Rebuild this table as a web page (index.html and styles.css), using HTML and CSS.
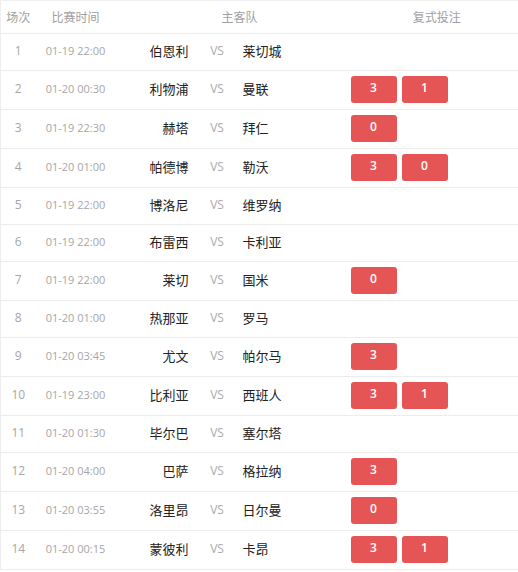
FILE: index.html
```html
<!DOCTYPE html>
<html lang="zh">
<head>
<meta charset="utf-8">
<link rel="stylesheet" href="styles.css">
</head>
<body>
<table class="bets">
  <colgroup>
    <col class="c-no"><col class="c-time"><col class="c-home"><col class="c-vs"><col class="c-away"><col class="c-bet">
  </colgroup>
  <thead>
    <tr><th>场次</th><th>比赛时间</th><th colspan="3" class="th-teams">主客队</th><th class="th-bet">复式投注</th></tr>
  </thead>
  <tbody>
    <tr class="short"><td class="no">1</td><td class="time">01-19 22:00</td><td class="home">伯恩利</td><td class="vs">VS</td><td class="away">莱切城</td><td class="bet"></td></tr>
    <tr><td class="no">2</td><td class="time">01-20 00:30</td><td class="home">利物浦</td><td class="vs">VS</td><td class="away">曼联</td><td class="bet"><span class="btn">3</span><span class="btn">1</span></td></tr>
    <tr><td class="no">3</td><td class="time">01-19 22:30</td><td class="home">赫塔</td><td class="vs">VS</td><td class="away">拜仁</td><td class="bet"><span class="btn">0</span></td></tr>
    <tr><td class="no">4</td><td class="time">01-20 01:00</td><td class="home">帕德博</td><td class="vs">VS</td><td class="away">勒沃</td><td class="bet"><span class="btn">3</span><span class="btn">0</span></td></tr>
    <tr class="short"><td class="no">5</td><td class="time">01-19 22:00</td><td class="home">博洛尼</td><td class="vs">VS</td><td class="away">维罗纳</td><td class="bet"></td></tr>
    <tr class="short"><td class="no">6</td><td class="time">01-19 22:00</td><td class="home">布雷西</td><td class="vs">VS</td><td class="away">卡利亚</td><td class="bet"></td></tr>
    <tr><td class="no">7</td><td class="time">01-19 22:00</td><td class="home">莱切</td><td class="vs">VS</td><td class="away">国米</td><td class="bet"><span class="btn">0</span></td></tr>
    <tr class="short"><td class="no">8</td><td class="time">01-20 01:00</td><td class="home">热那亚</td><td class="vs">VS</td><td class="away">罗马</td><td class="bet"></td></tr>
    <tr><td class="no">9</td><td class="time">01-20 03:45</td><td class="home">尤文</td><td class="vs">VS</td><td class="away">帕尔马</td><td class="bet"><span class="btn">3</span></td></tr>
    <tr><td class="no">10</td><td class="time">01-19 23:00</td><td class="home">比利亚</td><td class="vs">VS</td><td class="away">西班人</td><td class="bet"><span class="btn">3</span><span class="btn">1</span></td></tr>
    <tr class="short"><td class="no">11</td><td class="time">01-20 01:30</td><td class="home">毕尔巴</td><td class="vs">VS</td><td class="away">塞尔塔</td><td class="bet"></td></tr>
    <tr><td class="no">12</td><td class="time">01-20 04:00</td><td class="home">巴萨</td><td class="vs">VS</td><td class="away">格拉纳</td><td class="bet"><span class="btn">3</span></td></tr>
    <tr><td class="no">13</td><td class="time">01-20 03:55</td><td class="home">洛里昂</td><td class="vs">VS</td><td class="away">日尔曼</td><td class="bet"><span class="btn">0</span></td></tr>
    <tr><td class="no">14</td><td class="time">01-20 00:15</td><td class="home">蒙彼利</td><td class="vs">VS</td><td class="away">卡昂</td><td class="bet"><span class="btn">3</span><span class="btn">1</span></td></tr>
  </tbody>
</table>
</body>
</html>
```
FILE: styles.css
```css
html, body {
  margin: 0;
  padding: 0;
  background: #fff;
}
body {
  font-family: "Noto Sans CJK SC", "Noto Sans", sans-serif;
  font-size: 12px;
  color: #333;
}
.bets {
  width: 518px;
  border-collapse: collapse;
  table-layout: fixed;
  border-top: 1px solid #f0f0f0;
  border-left: 1px solid #eee;
}
.c-no { width: 35px; }
.c-time { width: 80px; }
.c-home { width: 80px; }
.c-vs { width: 40px; }
.c-away { width: 114px; }
.c-bet { width: auto; }
th {
  height: 30px;
  padding: 0 0 2px;
  font-weight: normal;
  font-size: 12px;
  color: #a0a0a0;
  text-align: center;
  border-bottom: 1px solid #ececec;
}
th.th-teams { padding-left: 14px; }
th.th-bet { padding-left: 6px; }
td {
  height: 35px;
  padding: 0 0 3px;
  border-bottom: 1px solid #ececec;
  vertical-align: middle;
  line-height: 1;
}
tr.short td { height: 33px; }
td.no {
  text-align: center;
  color: #a6a6a6;
  font-size: 12px;
  font-family: "Open Sans", "Noto Sans", sans-serif;
}
td.time {
  text-align: center;
  color: #a6a6a6;
  font-size: 11px;
  font-family: "Open Sans", "Noto Sans", sans-serif;
}
td.home {
  text-align: right;
  padding-right: 7px;
  font-size: 13px;
  color: #222;
}
td.vs {
  text-align: center;
  padding-left: 3px;
  color: #aaa;
  font-size: 12px;
  font-family: "Open Sans", "Noto Sans", sans-serif;
}
td.away {
  text-align: left;
  padding-left: 7px;
  font-size: 13px;
  color: #222;
}
td.bet {
  padding-left: 1px;
}
.btn {
  display: inline-flex;
  align-items: center;
  justify-content: center;
  width: 46px;
  height: 27px;
  margin-right: 5px;
  padding-bottom: 3px;
  box-sizing: border-box;
  background: #e55555;
  border-radius: 3px;
  color: #fff;
  font-size: 12px;
  font-weight: 600;
  font-family: "Open Sans", "Noto Sans", sans-serif;
  vertical-align: middle;
  position: relative;
  top: 1px;
}
```
